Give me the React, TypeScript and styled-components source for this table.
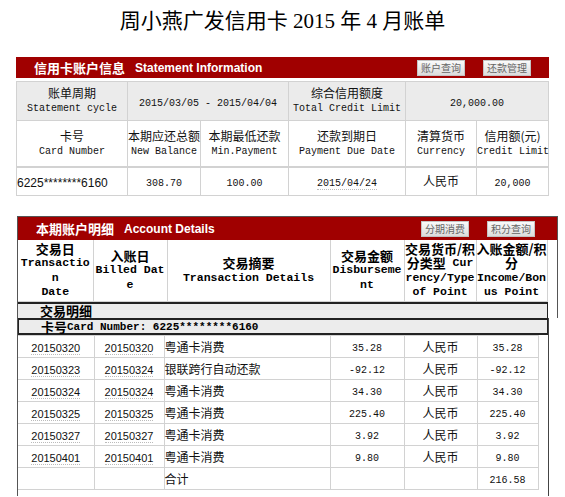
import React from "react";
import styled, { createGlobalStyle } from "styled-components";

const CJK = `"Noto Sans CJK SC", sans-serif`;
const MONO = `"Liberation Mono", "Noto Sans CJK SC", monospace`;
const RED = "#a00000";
const LINE = "#d2d2d2";

const Global = createGlobalStyle`
  html, body { margin: 0; padding: 0; background: #fff; }
  body { font-family: "Liberation Sans", "Noto Sans CJK SC", sans-serif; color: #000; }
`;

const Page = styled.div`
  width: 565px;
  height: 497px;
  overflow: hidden;
`;

const Title = styled.h1`
  margin: 0;
  height: 57px;
  padding-top: 7px;
  box-sizing: border-box;
  text-align: center;
  font-family: "Liberation Serif", "Noto Sans CJK SC", serif;
  font-weight: normal;
  font-size: 21px;
  line-height: 28px;
`;

const Summary = styled.section`
  margin-left: 16px;
  width: 533px;
`;

const Bar = styled.div<{ $h: number; $pl: number; $pr: number }>`
  display: flex;
  align-items: center;
  justify-content: space-between;
  height: ${(p) => p.$h}px;
  background: ${RED};
  padding: 0 ${(p) => p.$pr}px 0 ${(p) => p.$pl}px;
  box-sizing: border-box;
`;

const BarTitle = styled.div`
  display: flex;
  align-items: center;
  gap: 10px;
  color: #fff;
  font-weight: bold;
`;

const BarCn = styled.span`
  font-family: ${CJK};
  font-size: 13px;
  line-height: 16px;
`;

const BarEn = styled.span`
  font-family: "Liberation Sans", Arial, sans-serif;
  font-size: 12px;
  line-height: 16px;
`;

const Buttons = styled.div`
  display: flex;
  gap: 18px;
`;

const Btn = styled.span`
  display: flex;
  align-items: center;
  justify-content: center;
  width: 48px;
  height: 16px;
  box-sizing: border-box;
  border: 1px solid #c4c4c4;
  background: linear-gradient(#fafafa, #dcdcdc);
  color: #666;
  font-family: ${CJK};
  font-size: 10px;
  line-height: 14px;
`;

const InfoTable = styled.table`
  margin-top: 3px;
  width: 532px;
  border-collapse: collapse;
  table-layout: fixed;
`;

const InfoCell = styled.td<{ $h?: number; $gray?: boolean; $left?: boolean; $double?: boolean }>`
  height: ${(p) => p.$h ?? 20}px;
  padding: 0;
  border: 1px solid ${LINE};
  border-top: ${(p) => (p.$double ? `2px solid ${LINE}` : `1px solid ${LINE}`)};
  background: ${(p) => (p.$gray ? "#ebebeb" : "#fff")};
  text-align: ${(p) => (p.$left ? "left" : "center")};
  vertical-align: middle;
  white-space: nowrap;
  overflow: visible;
`;

const CnLabel = styled.div`
  font-family: ${CJK};
  font-size: 12px;
  line-height: 16px;
  color: #111;
`;

const EnLabel = styled.div`
  font-family: ${MONO};
  font-size: 10px;
  line-height: 16px;
  color: #111;
`;

const Num = styled.span<{ $dotted?: boolean }>`
  font-family: ${MONO};
  font-size: 10px;
  line-height: 14px;
  color: #111;
  border-bottom: ${(p) => (p.$dotted ? "1px dotted #bbb" : "none")};
`;

const SansNum = styled.span<{ $dotted?: boolean; $size?: number }>`
  font-family: "Liberation Sans", Arial, sans-serif;
  font-size: ${(p) => p.$size ?? 11}px;
  line-height: 14px;
  color: #111;
  border-bottom: ${(p) => (p.$dotted ? "1px dotted #bbb" : "none")};
`;

const CnText = styled.span`
  font-family: ${CJK};
  font-size: 12px;
  line-height: 16px;
  vertical-align: top;
  color: #111;
`;

const Details = styled.section`
  margin: 20px 0 0 17px;
  width: 541px;
  height: 280px;
  box-sizing: border-box;
  border-top: 1px solid #555;
  border-left: 1px solid #555;
`;

const Upper = styled.div`
  width: 540px;
  box-sizing: border-box;
  border-right: 1px solid #555;
`;

const HeadTable = styled.table`
  width: 529px;
  border-collapse: collapse;
  table-layout: fixed;
`;

const HeadCell = styled.th`
  height: 61px;
  padding: 0;
  border: 1px solid ${LINE};
  border-top: none;
  vertical-align: middle;
  text-align: center;
  color: #000;
  font-weight: bold;
  &:first-child { border-left: none; }
`;

const HeadLine = styled.div`
  height: 14.5px;
  font-family: ${MONO};
  font-size: 11.5px;
  line-height: 14.5px;
  white-space: nowrap;
`;

const HeadCn = styled.span`
  font-family: ${CJK};
  font-size: 13px;
  line-height: 14.5px;
  vertical-align: top;
`;

const Lower = styled.div`
  width: 531px;
  height: 178px;
  border-right: 1px solid #444;
  box-sizing: border-box;
`;

const GroupRow = styled.div<{ $boxed?: boolean }>`
  width: 530px;
  height: ${(p) => (p.$boxed ? 17 : 16)}px;
  box-sizing: border-box;
  display: flex;
  align-items: center;
  padding-left: 22px;
  background: #ececec;
  border-top: 2px solid #222;
  border-left: ${(p) => (p.$boxed ? "1px solid #222" : "none")};
  border-right: 1px solid #222;
  border-bottom: ${(p) => (p.$boxed ? "2px solid #222" : "none")};
  font-family: ${MONO};
  font-size: 11px;
  font-weight: bold;
  line-height: 14px;
  color: #000;
  white-space: nowrap;
`;

const GroupCn = styled.span`
  font-family: ${CJK};
  font-size: 13px;
  line-height: 14px;
`;

const DataTable = styled.table`
  width: 520px;
  border-collapse: collapse;
  table-layout: fixed;
`;

const DataCell = styled.td<{ $left?: boolean }>`
  height: 21px;
  padding: 0;
  border: 1px solid ${LINE};
  text-align: ${(p) => (p.$left ? "left" : "center")};
  vertical-align: middle;
  white-space: nowrap;
  line-height: 16px;
  &:first-child { border-left: none; }
`;

const rows = [
  ["20150320", "20150320", "粤通卡消费", "35.28", "35.28"],
  ["20150323", "20150324", "银联跨行自动还款", "-92.12", "-92.12"],
  ["20150324", "20150324", "粤通卡消费", "34.30", "34.30"],
  ["20150325", "20150325", "粤通卡消费", "225.40", "225.40"],
  ["20150327", "20150327", "粤通卡消费", "3.92", "3.92"],
  ["20150401", "20150401", "粤通卡消费", "9.80", "9.80"],
];

export default function App() {
  return (
    <Page>
      <Global />
      <Title>周小燕广发信用卡 2015 年 4 月账单</Title>

      <Summary>
        <Bar $h={21} $pl={18} $pr={18}>
          <BarTitle>
            <BarCn>信用卡账户信息</BarCn>
            <BarEn>Statement Information</BarEn>
          </BarTitle>
          <Buttons>
            <Btn>账户查询</Btn>
            <Btn>还款管理</Btn>
          </Buttons>
        </Bar>
        <InfoTable>
          <colgroup>
            <col style={{ width: 111 }} />
            <col style={{ width: 73 }} />
            <col style={{ width: 88 }} />
            <col style={{ width: 117 }} />
            <col style={{ width: 71 }} />
            <col style={{ width: 72 }} />
          </colgroup>
          <tbody>
            <tr>
              <InfoCell $h={38} $gray>
                <CnLabel>账单周期</CnLabel>
                <EnLabel>Statement cycle</EnLabel>
              </InfoCell>
              <InfoCell $h={38} $gray colSpan={2}>
                <Num>2015/03/05 - 2015/04/04</Num>
              </InfoCell>
              <InfoCell $h={38} $gray>
                <CnLabel>综合信用额度</CnLabel>
                <EnLabel>Total Credit Limit</EnLabel>
              </InfoCell>
              <InfoCell $h={38} $gray colSpan={2}>
                <Num>20,000.00</Num>
              </InfoCell>
            </tr>
            <tr>
              <InfoCell $h={45}>
                <CnLabel>卡号</CnLabel>
                <EnLabel>Card Number</EnLabel>
              </InfoCell>
              <InfoCell $h={45}>
                <CnLabel>本期应还总额</CnLabel>
                <EnLabel>New Balance</EnLabel>
              </InfoCell>
              <InfoCell $h={45}>
                <CnLabel>本期最低还款</CnLabel>
                <EnLabel>Min.Payment</EnLabel>
              </InfoCell>
              <InfoCell $h={45}>
                <CnLabel>还款到期日</CnLabel>
                <EnLabel>Payment Due Date</EnLabel>
              </InfoCell>
              <InfoCell $h={45}>
                <CnLabel>清算货币</CnLabel>
                <EnLabel>Currency</EnLabel>
              </InfoCell>
              <InfoCell $h={45}>
                <CnLabel>信用额(元)</CnLabel>
                <EnLabel>Credit Limit</EnLabel>
              </InfoCell>
            </tr>
            <tr>
              <InfoCell $h={27} $left $double>
                <SansNum $size={12}>6225********6160</SansNum>
              </InfoCell>
              <InfoCell $h={27} $double>
                <Num>308.70</Num>
              </InfoCell>
              <InfoCell $h={27} $double>
                <Num>100.00</Num>
              </InfoCell>
              <InfoCell $h={27} $double>
                <Num $dotted>2015/04/24</Num>
              </InfoCell>
              <InfoCell $h={27} $double>
                <CnText>人民币</CnText>
              </InfoCell>
              <InfoCell $h={27} $double>
                <Num>20,000</Num>
              </InfoCell>
            </tr>
          </tbody>
        </InfoTable>
      </Summary>

      <Details>
        <Upper>
          <Bar $h={23} $pl={18} $pr={22}>
            <BarTitle>
              <BarCn>本期账户明细</BarCn>
              <BarEn>Account Details</BarEn>
            </BarTitle>
            <Buttons>
              <Btn>分期消费</Btn>
              <Btn>积分查询</Btn>
            </Buttons>
          </Bar>
          <HeadTable>
            <colgroup>
              <col style={{ width: 75 }} />
              <col style={{ width: 74 }} />
              <col style={{ width: 163 }} />
              <col style={{ width: 74 }} />
              <col style={{ width: 72 }} />
              <col style={{ width: 71 }} />
            </colgroup>
            <thead>
              <tr>
                <HeadCell>
                  <HeadLine><HeadCn>交易日</HeadCn></HeadLine>
                  <HeadLine>Transactio</HeadLine>
                  <HeadLine>n</HeadLine>
                  <HeadLine>Date</HeadLine>
                </HeadCell>
                <HeadCell>
                  <HeadLine><HeadCn>入账日</HeadCn></HeadLine>
                  <HeadLine>Billed Dat</HeadLine>
                  <HeadLine>e</HeadLine>
                </HeadCell>
                <HeadCell>
                  <HeadLine><HeadCn>交易摘要</HeadCn></HeadLine>
                  <HeadLine>Transaction Details</HeadLine>
                </HeadCell>
                <HeadCell>
                  <HeadLine><HeadCn>交易金额</HeadCn></HeadLine>
                  <HeadLine>Disburseme</HeadLine>
                  <HeadLine>nt</HeadLine>
                </HeadCell>
                <HeadCell>
                  <HeadLine><HeadCn>交易货币/积</HeadCn></HeadLine>
                  <HeadLine><HeadCn>分类型</HeadCn> Cur</HeadLine>
                  <HeadLine>rency/Type</HeadLine>
                  <HeadLine>of Point</HeadLine>
                </HeadCell>
                <HeadCell>
                  <HeadLine><HeadCn>入账金额/积</HeadCn></HeadLine>
                  <HeadLine><HeadCn>分</HeadCn></HeadLine>
                  <HeadLine>Income/Bon</HeadLine>
                  <HeadLine>us Point</HeadLine>
                </HeadCell>
              </tr>
            </thead>
          </HeadTable>
          <GroupRow>
            <GroupCn>交易明细</GroupCn>
          </GroupRow>
        </Upper>
        <Lower>
          <GroupRow $boxed>
            <GroupCn>卡号</GroupCn>Card Number: 6225********6160
          </GroupRow>
          <DataTable>
            <colgroup>
              <col style={{ width: 76 }} />
              <col style={{ width: 70 }} />
              <col style={{ width: 166 }} />
              <col style={{ width: 74 }} />
              <col style={{ width: 73 }} />
              <col style={{ width: 61 }} />
            </colgroup>
            <tbody>
              {rows.map((r) => (
                <tr key={r[0] + r[2] + r[3]}>
                  <DataCell>
                    <SansNum $dotted>{r[0]}</SansNum>
                  </DataCell>
                  <DataCell>
                    <SansNum $dotted>{r[1]}</SansNum>
                  </DataCell>
                  <DataCell $left>
                    <CnText>{r[2]}</CnText>
                  </DataCell>
                  <DataCell>
                    <Num>{r[3]}</Num>
                  </DataCell>
                  <DataCell>
                    <CnText>人民币</CnText>
                  </DataCell>
                  <DataCell>
                    <Num>{r[4]}</Num>
                  </DataCell>
                </tr>
              ))}
              <tr>
                <DataCell />
                <DataCell />
                <DataCell $left>
                  <CnText>合计</CnText>
                </DataCell>
                <DataCell />
                <DataCell />
                <DataCell>
                  <Num>216.58</Num>
                </DataCell>
              </tr>
            </tbody>
          </DataTable>
        </Lower>
      </Details>
    </Page>
  );
}
